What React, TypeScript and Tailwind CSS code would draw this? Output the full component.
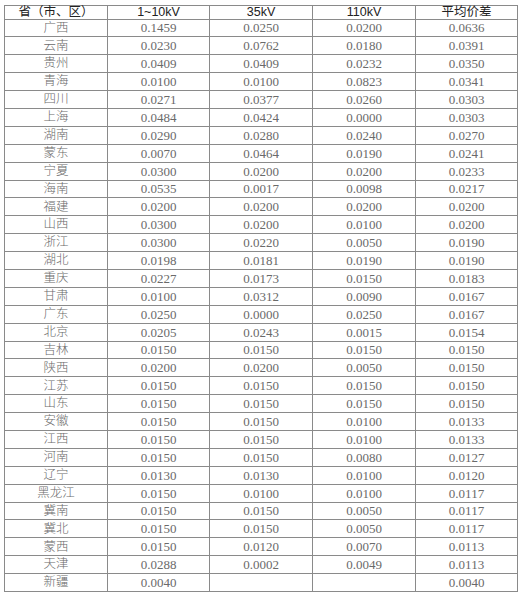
import React from "react";

// 省（市、区）, 1~10kV, 35kV, 110kV, 平均价差
const rows: string[][] = [
  ["广西", "0.1459", "0.0250", "0.0200", "0.0636"],
  ["云南", "0.0230", "0.0762", "0.0180", "0.0391"],
  ["贵州", "0.0409", "0.0409", "0.0232", "0.0350"],
  ["青海", "0.0100", "0.0100", "0.0823", "0.0341"],
  ["四川", "0.0271", "0.0377", "0.0260", "0.0303"],
  ["上海", "0.0484", "0.0424", "0.0000", "0.0303"],
  ["湖南", "0.0290", "0.0280", "0.0240", "0.0270"],
  ["蒙东", "0.0070", "0.0464", "0.0190", "0.0241"],
  ["宁夏", "0.0300", "0.0200", "0.0200", "0.0233"],
  ["海南", "0.0535", "0.0017", "0.0098", "0.0217"],
  ["福建", "0.0200", "0.0200", "0.0200", "0.0200"],
  ["山西", "0.0300", "0.0200", "0.0100", "0.0200"],
  ["浙江", "0.0300", "0.0220", "0.0050", "0.0190"],
  ["湖北", "0.0198", "0.0181", "0.0190", "0.0190"],
  ["重庆", "0.0227", "0.0173", "0.0150", "0.0183"],
  ["甘肃", "0.0100", "0.0312", "0.0090", "0.0167"],
  ["广东", "0.0250", "0.0000", "0.0250", "0.0167"],
  ["北京", "0.0205", "0.0243", "0.0015", "0.0154"],
  ["吉林", "0.0150", "0.0150", "0.0150", "0.0150"],
  ["陕西", "0.0200", "0.0200", "0.0050", "0.0150"],
  ["江苏", "0.0150", "0.0150", "0.0150", "0.0150"],
  ["山东", "0.0150", "0.0150", "0.0150", "0.0150"],
  ["安徽", "0.0150", "0.0150", "0.0100", "0.0133"],
  ["江西", "0.0150", "0.0150", "0.0100", "0.0133"],
  ["河南", "0.0150", "0.0150", "0.0080", "0.0127"],
  ["辽宁", "0.0130", "0.0130", "0.0100", "0.0120"],
  ["黑龙江", "0.0150", "0.0100", "0.0100", "0.0117"],
  ["冀南", "0.0150", "0.0150", "0.0050", "0.0117"],
  ["冀北", "0.0150", "0.0150", "0.0050", "0.0117"],
  ["蒙西", "0.0150", "0.0120", "0.0070", "0.0113"],
  ["天津", "0.0288", "0.0002", "0.0049", "0.0113"],
  ["新疆", "0.0040", "", "", "0.0040"],
];

const headers = ["省（市、区）", "1~10kV", "35kV", "110kV", "平均价差"];

export default function App() {
  return (
    <div className="w-[524px] h-[596px] bg-white pt-[5px] pl-[4px]">
      <table className="table-fixed border-collapse w-[513px] h-[587px]">
        <colgroup>
          <col className="w-[103px]" />
          <col className="w-[102px]" />
          <col className="w-[103px]" />
          <col className="w-[103px]" />
          <col className="w-[102px]" />
        </colgroup>
        <thead>
          <tr>
            {headers.map((h) => (
              <th
                key={h}
                className="border border-[#8a8a8a] p-0 text-center text-[12.5px] leading-none font-normal text-[#222] [font-family:'Liberation_Sans','Noto_Sans_CJK_SC',sans-serif]"
              >
                {h}
              </th>
            ))}
          </tr>
        </thead>
        <tbody>
          {rows.map((r) => (
            <tr key={r[0]}>
              {r.map((c, i) => (
                <td
                  key={i}
                  className={
                    i === 0
                      ? "border border-[#8a8a8a] p-0 text-center text-[12.5px] leading-none text-[#6a6a6a] [font-family:'Liberation_Serif','Noto_Sans_CJK_SC',serif] font-light"
                      : "border border-[#8a8a8a] p-0 text-center text-[13px] leading-none text-[#6a6a6a] [font-family:'Liberation_Serif',serif]"
                  }
                >
                  {c}
                </td>
              ))}
            </tr>
          ))}
        </tbody>
      </table>
    </div>
  );
}
